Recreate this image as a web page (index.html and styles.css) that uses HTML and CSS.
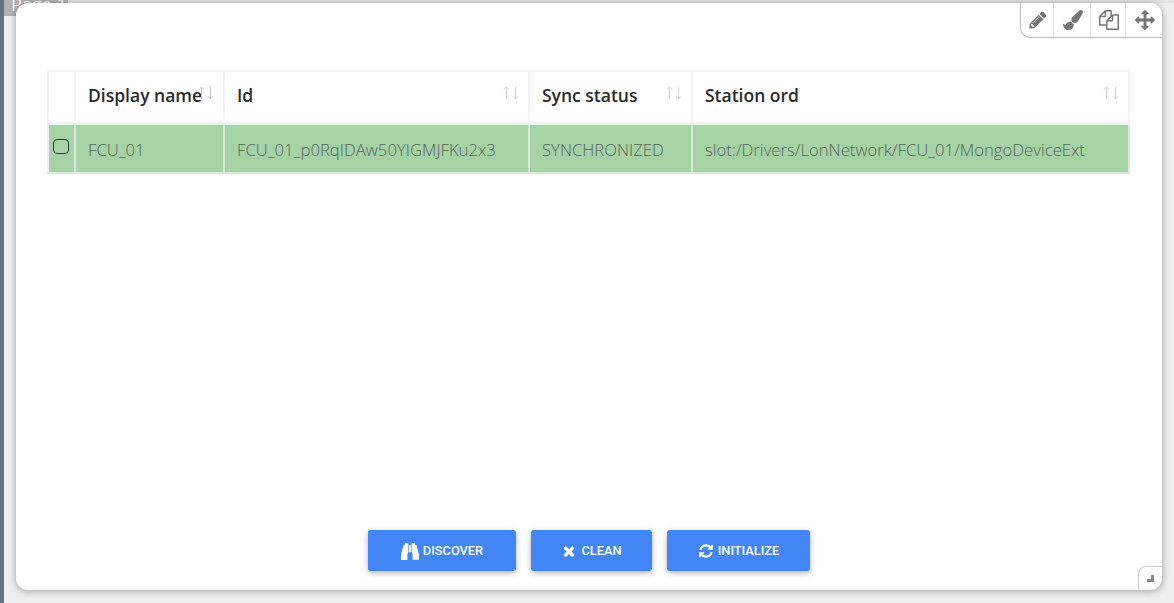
FILE: index.html
```html
<!DOCTYPE html>
<html lang="en">
<head>
<meta charset="utf-8">
<title>Mongo devices</title>
<link rel="stylesheet" href="styles.css">
</head>
<body>
<svg class="defs" width="0" height="0" aria-hidden="true">
  <symbol id="sort" viewBox="0 0 16 14">
    <path d="M3.5 13V1M.8 3.8 3.5 1l2.7 2.8M12.5 1v12M9.8 10.2l2.7 2.8 2.7-2.8" fill="none" stroke="currentColor" stroke-width="1"/>
  </symbol>
</svg>
<div class="rail"></div>
<main class="stage">
  <div class="page-tab">Page 1</div>
  <section class="card">
    <div class="toolbar">
      <span class="tool"><svg class="tool-icon" viewBox="0 0 1792 1792"><path d="M491 1536l91-91-235-235-91 91v107h128v128h107zm523-928q0-22-22-22-10 0-17 7l-542 542q-7 7-7 17 0 22 22 22 10 0 17-7l542-542q7-7 7-17zm-54-192l416 416-832 832h-416v-416zm683 96q0 53-37 90l-166 166-416-416 166-165q36-38 90-38 53 0 91 38l235 234q37 39 37 91z"/></svg></span>
      <span class="tool tool-brush"><svg class="tool-icon" viewBox="0 0 1792 1792"><path d="M1615 0q70 0 122.5 46.5t52.5 116.5q0 63-45 151-332 629-465 752-97 91-218 91-126 0-216.5-92.5t-90.5-219.5q0-128 92-212l638-579q59-54 130-54zm-909 1034q39 76 106.5 130t150.5 76l1 71q4 213-129.5 347t-348.5 134q-123 0-218-46.5t-152.5-127.5-86.5-183-29-220q7 5 41 30t62 44.5 59 36.5 46 17q41 0 55-37 25-66 57.5-112.5t69.5-76 88-47.5 103-25.5 125-10.5z"/></svg></span>
      <span class="tool tool-copy"><svg class="tool-icon" viewBox="0 0 1792 1792"><path d="M1696 384q40 0 68 28t28 68v1216q0 40-28 68t-68 28h-960q-40 0-68-28t-28-68v-288h-544q-40 0-68-28t-28-68v-672q0-40 20-88t48-76l408-408q28-28 76-48t88-20h416q40 0 68 28t28 68v328q68-40 128-40h416zm-544 213l-299 299h299v-299zm-640-384l-299 299h299v-299zm196 647l316-316v-416h-384v416q0 40-28 68t-68 28h-416v640h512v-256q0-40 20-88t48-76zm956 804v-1152h-384v416q0 40-28 68t-68 28h-416v640h896z"/></svg></span>
      <span class="tool tool-move"><svg class="tool-icon" viewBox="0 0 1792 1792"><path d="M1792 896q0 26-19 45l-256 256q-19 19-45 19t-45-19-19-45v-128h-384v384h128q26 0 45 19t19 45-19 45l-256 256q-19 19-45 19t-45-19l-256-256q-19-19-19-45t19-45 45-19h128v-384h-384v128q0 26-19 45t-45 19-45-19l-256-256q-19-19-19-45t19-45l256-256q19-19 45-19t45 19 19 45v128h384v-384h-128q-26 0-45-19t-19-45 19-45l256-256q19-19 45-19t45 19l256 256q19 19 19 45t-19 45-45 19h-128v384h384v-128q0-26 19-45t45-19 45 19l256 256q19 19 19 45z"/></svg></span>
    </div>

    <table class="grid">
      <colgroup>
        <col class="c-check"><col class="c-name"><col class="c-id"><col class="c-sync"><col class="c-ord">
      </colgroup>
      <thead>
        <tr>
          <th></th>
          <th><span class="th-inner"><span class="th-label">Display name</span><svg class="sort sort-tight"><use href="#sort"/></svg></span></th>
          <th><span class="th-inner"><span class="th-label">Id</span><svg class="sort"><use href="#sort"/></svg></span></th>
          <th><span class="th-inner"><span class="th-label">Sync status</span><svg class="sort"><use href="#sort"/></svg></span></th>
          <th><span class="th-inner"><span class="th-label">Station ord</span><svg class="sort"><use href="#sort"/></svg></span></th>
        </tr>
      </thead>
      <tbody>
        <tr>
          <td class="check-cell"><span class="check"></span></td>
          <td>FCU_01</td>
          <td>FCU_01_p0RqIDAw50YIGMJFKu2x3</td>
          <td>SYNCHRONIZED</td>
          <td>slot:/Drivers/LonNetwork/FCU_01/MongoDeviceExt</td>
        </tr>
      </tbody>
    </table>

    <div class="actions">
      <button class="btn btn-discover" type="button"><svg class="btn-icon btn-icon-lg" viewBox="0 0 1792 1792"><path d="M704 320v768q0 26-19 45t-45 19v576q0 26-19 45t-45 19h-512q-26 0-45-19t-19-45v-512l249-873q7-23 31-23h424zm320 0v704h-256v-704h256zm768 984v408q0 26-19 45t-45 19h-512q-26 0-45-19t-19-45v-576q-26 0-45-19t-19-45v-768h424q24 0 31 23zM736 160v224h-352v-224q0-14 9-23t23-9h288q14 0 23 9t9 23zm672 0v224h-352v-224q0-14 9-23t23-9h288q14 0 23 9t9 23z"/></svg>Discover</button>
      <button class="btn btn-clean" type="button"><svg class="btn-icon" viewBox="0 0 1792 1792"><path d="M1490 1322q0 40-28 68l-136 136q-28 28-68 28t-68-28l-294-294-294 294q-28 28-68 28t-68-28l-136-136q-28-28-28-68t28-68l294-294-294-294q-28-28-28-68t28-68l136-136q28-28 68-28t68 28l294 294 294-294q28-28 68-28t68 28l136 136q28 28 28 68t-28 68l-294 294 294 294q28 28 28 68z"/></svg>Clean</button>
      <button class="btn btn-init" type="button"><svg class="btn-icon" viewBox="0 0 1792 1792"><path d="M1639 1056q0 5-1 7-64 268-268 434.5t-478 166.5q-146 0-282.5-55t-243.5-157l-129 129q-19 19-45 19t-45-19-19-45v-448q0-26 19-45t45-19h448q26 0 45 19t19 45-19 45l-137 137q71 66 161 102t187 36q134 0 250-65t186-179q11-17 53-117 8-23 30-23h192q13 0 22.5 9.5t9.5 22.5zm25-800v448q0 26-19 45t-45 19h-448q-26 0-45-19t-19-45 19-45l138-138q-148-137-349-137-134 0-250 65t-186 179q-11 17-53 117-8 23-30 23h-199q-13 0-22.5-9.5t-9.5-22.5v-7q65-268 270-434.5t480-166.5q146 0 284 55.5t245 156.5l130-129q19-19 45-19t45 19 19 45z"/></svg>Initialize</button>
    </div>

    <div class="resize"><span class="resize-mark"></span></div>
  </section>
</main>
</body>
</html>
```

FILE: styles.css
```css
* { box-sizing: border-box; }

html, body {
  margin: 0;
  height: 603px;
  overflow: hidden;
}

body {
  display: flex;
  background: #efefef;
  font-family: "Open Sans", "Liberation Sans", sans-serif;
}

.defs { position: absolute; }

.rail {
  flex: 0 0 4px;
  background: #6b7380;
}

.stage {
  position: relative;
  flex: 1;
  padding: 3px 12px 13px 12px;
  background: #efefef;
  box-shadow: inset 0 3px 0 #e4e4e4;
}

.page-tab {
  position: absolute;
  left: 0;
  top: 0;
  width: 64px;
  height: 16px;
  padding-left: 7px;
  overflow: hidden;
  background: #b4b4b4;
  color: #fff;
  font: 18px/8px "Open Sans", sans-serif;
}

.card {
  position: relative;
  height: 587px;
  display: flex;
  flex-direction: column;
  padding: 67px 32px 19px 31px;
  background: #fff;
  border-radius: 12px;
  box-shadow: 0 1px 6px 1px rgba(0, 0, 0, .28);
}

.toolbar {
  position: absolute;
  top: 0;
  right: 0;
  display: flex;
  height: 35px;
  background: #fff;
  border-left: 1px solid #bdbdbd;
  border-bottom: 1px solid #bdbdbd;
  border-bottom-left-radius: 10px;
  border-top-right-radius: 12px;
}

.tool {
  display: flex;
  align-items: center;
  justify-content: center;
  width: 33px;
  padding-left: 2px;
  border-right: 1px solid #dedede;
}

.tool-brush { width: 37px; }
.tool-copy { width: 35px; }
.tool-move { width: 36px; border-right: 0; }

.tool-icon {
  width: 20px;
  height: 20px;
  fill: #757575;
}

.grid {
  width: 1083px;
  table-layout: fixed;
  border-collapse: collapse;
  border: 2px solid #f3f3f3;
  color: #212529;
}

.c-check { width: 27px; }
.c-name { width: 149px; }
.c-id { width: 305px; }
.c-sync { width: 163px; }

.grid th {
  height: 52px;
  padding: 0 9px 4px 12px;
  border: 2px solid #f3f3f3;
  border-bottom-width: 3px;
  background: #fff;
  color: #2b2b2b;
  font-size: 17.5px;
  font-weight: 600;
  text-align: left;
}

.grid th:first-child,
.grid td:first-child { border-left-width: 1px; }

.th-inner {
  display: flex;
  align-items: center;
  justify-content: space-between;
}

.th-label { white-space: nowrap; }

.sort {
  flex: none;
  width: 16px;
  height: 14px;
  margin-top: -4px;
  color: #d2d2d2;
}

.sort-tight {
  margin-left: -6px;
  color: #c4c4c4;
}

.grid td {
  height: 50px;
  padding: 2px 12px 0;
  border: 2px solid #dbe8db;
  background: #a5d3a5;
  color: #5a645a;
  font-size: 16.7px;
  font-weight: 300;
  white-space: nowrap;
}

.grid .check-cell { padding: 0 0 0 4px; }

.check {
  display: block;
  width: 16px;
  height: 15px;
  margin-top: -4px;
  border: 1.5px solid #2f3d33;
  border-radius: 4px;
}

.actions {
  display: flex;
  justify-content: center;
  gap: 15px;
  margin-top: auto;
  margin-left: 1px;
}

.btn {
  display: flex;
  align-items: center;
  justify-content: center;
  gap: 4px;
  height: 41px;
  padding: 0;
  border: 0;
  border-radius: 3px;
  background: #4285f4;
  color: #fff;
  font-family: Roboto, "Liberation Sans", sans-serif;
  font-size: 12.8px;
  font-weight: 500;
  text-transform: uppercase;
  box-shadow: 0 2px 5px 0 rgba(0, 0, 0, .2), 0 2px 8px 0 rgba(0, 0, 0, .12);
}

.btn-discover { width: 148px; }
.btn-clean { width: 121px; }
.btn-init { width: 143px; }

.btn-icon {
  width: 16px;
  height: 16px;
  fill: #fff;
}

.btn-icon-lg {
  width: 18px;
  height: 18px;
}

.resize {
  position: absolute;
  right: 0;
  bottom: 0;
  display: flex;
  align-items: center;
  justify-content: center;
  width: 24px;
  height: 24px;
  border-left: 1px solid #cfcfcf;
  border-top: 1px solid #cfcfcf;
  border-top-left-radius: 8px;
}

.resize-mark {
  width: 7px;
  height: 7px;
  border-right: 3px solid #8a8a8a;
  border-bottom: 3px solid #8a8a8a;
}
```
